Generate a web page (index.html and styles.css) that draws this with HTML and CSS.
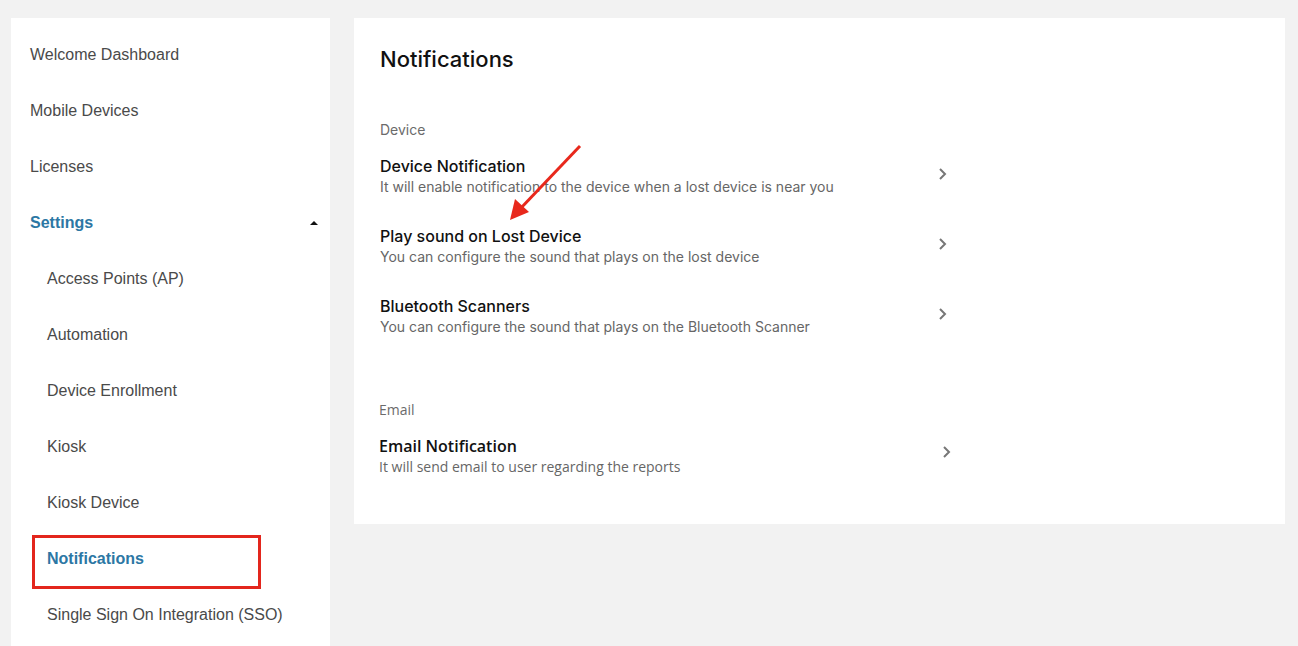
FILE: index.html
```html
<!DOCTYPE html>
<html lang="en">
<head>
    <meta charset="UTF-8">
    <meta name="viewport" content="width=device-width, initial-scale=1.0">
    <title>Settings - Notifications</title>
    <link rel="stylesheet" href="styles.css">
</head>
<body>
    <div id="sidebar">
        <a class="nav-item">Welcome Dashboard</a>
        <a class="nav-item">Mobile Devices</a>
        <a class="nav-item">Licenses</a>
        <a class="nav-item nav-open">Settings <span class="caret"></span></a>
        <a class="nav-item sub">Access Points (AP)</a>
        <a class="nav-item sub">Automation</a>
        <a class="nav-item sub">Device Enrollment</a>
        <a class="nav-item sub">Kiosk</a>
        <a class="nav-item sub">Kiosk Device</a>
        <a class="nav-item sub active">Notifications<span class="mark"></span></a>
        <a class="nav-item sub">Single Sign On Integration (SSO)</a>
    </div>

    <div id="content">
        <h1>Notifications</h1>

        <div class="group">
            <p class="group-label">Device</p>
            <div class="row">
                <div>
                    <p class="row-title">Device Notification</p>
                    <p class="row-sub">It will enable notification to the device when a lost device is near you</p>
                </div>
                <svg class="chev" width="10" height="14" viewBox="0 0 10 14"><polyline points="2,2 7,7 2,12" /></svg>
            </div>
            <div class="row">
                <div>
                    <p class="row-title">Play sound on Lost Device</p>
                    <p class="row-sub">You can configure the sound that plays on the lost device</p>
                </div>
                <svg class="chev" width="10" height="14" viewBox="0 0 10 14"><polyline points="2,2 7,7 2,12" /></svg>
            </div>
            <div class="row">
                <div>
                    <p class="row-title">Bluetooth Scanners</p>
                    <p class="row-sub">You can configure the sound that plays on the Bluetooth Scanner</p>
                </div>
                <svg class="chev" width="10" height="14" viewBox="0 0 10 14"><polyline points="2,2 7,7 2,12" /></svg>
            </div>
        </div>

        <div class="group email">
            <p class="group-label">Email</p>
            <div class="row">
                <div>
                    <p class="row-title">Email Notification</p>
                    <p class="row-sub">It will send email to user regarding the reports</p>
                </div>
                <svg class="chev" width="10" height="14" viewBox="0 0 10 14"><polyline points="2,2 7,7 2,12" /></svg>
            </div>
        </div>

        <!-- pointer to the sound row -->
        <svg class="arrow" width="90" height="90" viewBox="0 0 90 90">
            <line x1="78" y1="3" x2="18" y2="66" />
            <polygon points="8,77 13,56 27,69" />
        </svg>
    </div>
</body>
</html>
```

FILE: styles.css
```css
* {
    box-sizing: border-box;
}
body {
    margin: 0;
    padding: 18px 13px 0 11px;
    background-color: #f2f2f2;
    display: flex;
    align-items: flex-start;
    gap: 24px;
    height: 100vh;
    overflow: hidden;
}
p {
    margin: 0;
}

/* left menu */
#sidebar {
    width: 319px;
    background: #fff;
    padding-top: 9px;
    align-self: stretch;
    overflow: hidden;
    font-family: "Liberation Sans", Arial, sans-serif;
}
.nav-item {
    display: flex;
    align-items: center;
    justify-content: space-between;
    height: 56px;
    padding: 0 11px 0 19px;
    font-size: 16px;
    color: #4a4a4a;
    position: relative;
}
.nav-item.sub {
    padding-left: 36px;
}
.nav-open, .nav-item.active {
    color: #2c77a4;
    font-weight: bold;
}
.caret {
    width: 0;
    height: 0;
    border-left: 4px solid transparent;
    border-right: 4px solid transparent;
    border-bottom: 4px solid #111;
    margin-right: 1px;
}
.mark {
    position: absolute;
    left: 21px;
    top: 4px;
    width: 229px;
    height: 54px;
    border: 3px solid #e3261d;
}

/* notification settings card */
#content {
    flex: 1;
    background: #fff;
    padding: 28px 26px 47px;
    position: relative;
    font-family: Inter, "Liberation Sans", sans-serif;
}
h1 {
    margin: 0;
    font-size: 22px;
    line-height: 26px;
    font-weight: 500;
    color: #111;
}
.group {
    margin-top: 48px;
    width: 568px;
}
.group.email {
    margin-top: 63px;
    margin-left: -1px;
    width: 573px;
    font-family: "Open Sans", "Liberation Sans", sans-serif;
}
.group-label {
    font-size: 14px;
    line-height: 20px;
    color: #6b6b6b;
    margin-bottom: 15px;
}
.row {
    display: flex;
    align-items: center;
    justify-content: space-between;
    margin-bottom: 28px;
}
.row:last-child {
    margin-bottom: 0;
}
.row-title {
    font-size: 16px;
    line-height: 22px;
    font-weight: 500;
    color: #111;
}
.email .row-title {
    font-weight: 600;
}
.row-sub {
    font-size: 14px;
    line-height: 20px;
    color: #666;
}
.chev {
    fill: none;
    stroke: #777;
    stroke-width: 2;
    margin-top: -5px;
}
.email .chev {
    margin-top: -8px;
}
.arrow {
    position: absolute;
    left: 148px;
    top: 125px;
}
.arrow line {
    stroke: #e8281c;
    stroke-width: 3;
}
.arrow polygon {
    fill: #e8281c;
}
```
